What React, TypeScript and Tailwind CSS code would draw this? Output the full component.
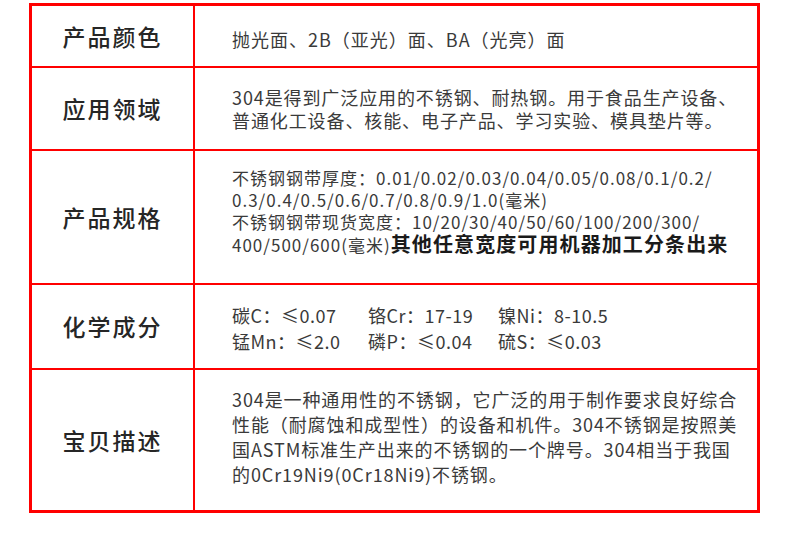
export default function App() {
  const rows = [
    { label: '产品颜色', h: 'h-[60px]' },
    { label: '应用领域', h: 'h-[81px]' },
    { label: '产品规格', h: 'h-[132px]' },
    { label: '化学成分', h: 'h-[83px]' },
    { label: '宝贝描述', h: 'h-[140px]' },
  ];

  const content = [
    <p className="text-[18px] leading-[23px] tracking-[1px] pt-[6px]">
      抛光面、2B（亚光）面、BA（光亮）面
    </p>,
    <p className="text-[18px] leading-[23px] tracking-[0.9px]">
      304是得到广泛应用的不锈钢、耐热钢。用于食品生产设备、
      <br />
      普通化工设备、核能、电子产品、学习实验、模具垫片等。
    </p>,
    <p className="text-[17px] leading-[22px] tracking-[1px] pb-[12px]">
      不锈钢钢带厚度：0.01/0.02/0.03/0.04/0.05/0.08/0.1/0.2/
      <br />
      0.3/0.4/0.5/0.6/0.7/0.8/0.9/1.0(毫米)
      <br />
      不锈钢钢带现货宽度：10/20/30/40/50/60/100/200/300/
      <br />
      400/500/600(毫米)
      <span className="font-bold text-[20px] leading-[22px] tracking-[1.1px] text-[#1a1a1a]">其他任意宽度可用机器加工分条出来</span>
    </p>,
    <div className="text-[18px] leading-[26px] tracking-[0.5px] pt-[2px]">
      <div className="flex">
        <span className="w-[136px]">碳C：≤0.07</span>
        <span className="w-[130px]">铬Cr：17-19</span>
        <span>镍Ni：8-10.5</span>
      </div>
      <div className="flex">
        <span className="w-[136px]">锰Mn：≤2.0</span>
        <span className="w-[130px]">磷P：≤0.04</span>
        <span>硫S：≤0.03</span>
      </div>
    </div>,
    <p className="text-[18px] leading-[25px] tracking-[0.9px] pb-[7px]">
      304是一种通用性的不锈钢，它广泛的用于制作要求良好综合
      <br />
      性能（耐腐蚀和成型性）的设备和机件。304不锈钢是按照美
      <br />
      国ASTM标准生产出来的不锈钢的一个牌号。304相当于我国
      <br />
      的0Cr19Ni9(0Cr18Ni9)不锈钢。
    </p>,
  ];

  return (
    <div
      className="w-[790px] h-[550px] bg-white pt-[3px] pl-[29px]"
      style={{ fontFamily: '"Noto Sans CJK SC", "Noto Sans", sans-serif' }}
    >
      <div className="w-[731px] border-[3px] border-[#ff0000] text-[#3a3a3a]">
        {rows.map((row, i) => (
          <div
            key={row.label}
            className={`flex ${row.h} ${i < rows.length - 1 ? 'border-b-2 border-[#ff0000]' : ''} box-content`}
          >
            <div className="w-[161px] shrink-0 border-r-2 border-[#ff0000] box-content flex items-center justify-center text-[23px] tracking-[2px] text-[#262626] font-medium">
              {row.label}
            </div>
            <div className="flex-1 flex items-center pl-[37px]">{content[i]}</div>
          </div>
        ))}
      </div>
    </div>
  );
}
